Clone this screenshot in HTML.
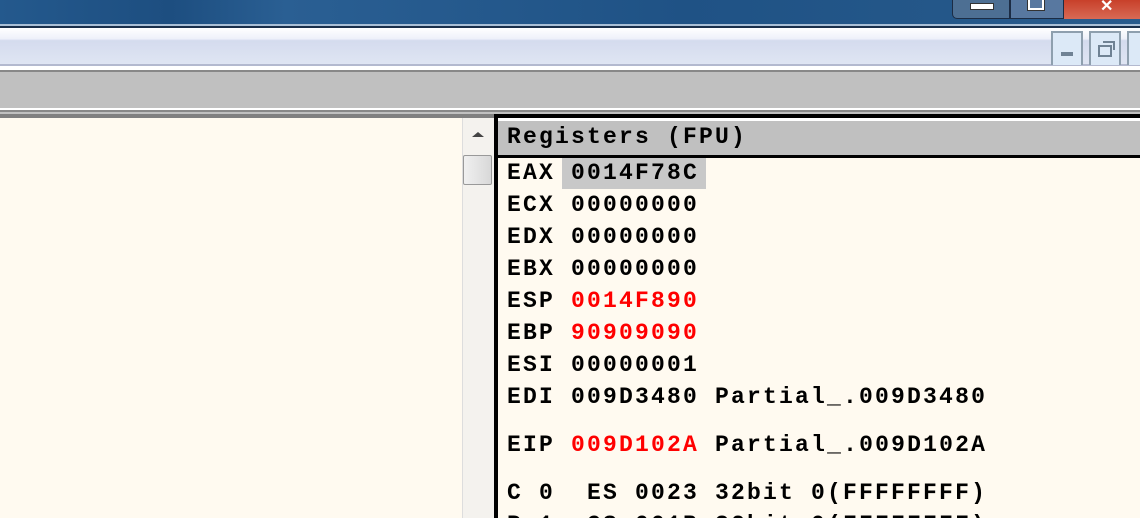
<!DOCTYPE html><html><head><style>
html,body{margin:0;width:1140px;height:518px;overflow:hidden}
body{position:relative;background:#fffaf0;font-family:"Liberation Mono",monospace}
div{position:absolute}
.r{left:507px;font-weight:bold;font-size:23px;letter-spacing:2.2px;line-height:32px;white-space:pre;color:#000}
.red{color:#f00}
</style></head><body>
<div style="left:0;top:0;width:1140px;height:518px;overflow:hidden">
<div style="left:0;top:0;width:1140px;height:24px;background:linear-gradient(90deg,#24598d,#1d4e80 15%,#2a5f93 25%,#1f5285 60%,#285b8c)"></div>
<div style="left:952px;top:0;width:56px;height:18px;background:#4d6f93;border:1px solid #1c2c44;border-top:none;border-radius:0 0 0 5px"></div>
<div style="left:970px;top:3px;width:22px;height:5px;background:#fff;border:1px solid #333"></div>
<div style="left:1010px;top:0;width:52px;height:18px;background:#5878a0;border:1px solid #1c2c44;border-top:none"></div>
<div style="left:1028px;top:0;width:12px;height:8px;border:2px solid #fff;border-top:none;outline:1px solid #333"></div>
<div style="left:1064px;top:0;width:76px;height:19px;background:linear-gradient(#c8402a,#d86a55)"></div>
<div style="left:1100px;top:-4px;color:#fff;font:bold 16px 'Liberation Sans',sans-serif">✕</div>
<div style="left:0;top:24px;width:1140px;height:2px;background:#a9bfd6"></div>
<div style="left:0;top:26px;width:1140px;height:2px;background:#1a2f4a"></div>
<div style="left:0;top:28px;width:1140px;height:36px;background:linear-gradient(#fff,#eef1fa 30%,#d4dbee 35%,#dfe5f3)"></div>
<div style="left:0;top:64px;width:1140px;height:2px;background:#b3b9cf"></div>
<div style="left:1051px;top:31px;width:32px;height:34px;background:#dce9f7;border:2px solid #8e9fae;border-bottom:none;box-sizing:border-box"></div>
<div style="left:1061px;top:52px;width:12px;height:4px;background:#6f8294"></div>
<div style="left:1089px;top:31px;width:32px;height:34px;background:#dce9f7;border:2px solid #8e9fae;border-bottom:none;box-sizing:border-box"></div>
<div style="left:1098px;top:45px;width:10px;height:8px;border:2px solid #6f8294"></div>
<div style="left:1103px;top:41px;width:10px;height:7px;border:2px solid #6f8294;border-left:none;border-bottom:none"></div>
<div style="left:1127px;top:31px;width:13px;height:34px;background:#dce9f7;border:2px solid #8e9fae;border-right:none;border-bottom:none;box-sizing:border-box"></div>
<div style="left:0;top:66px;width:1140px;height:4px;background:#fff"></div>
<div style="left:0;top:70px;width:1140px;height:2px;background:#888"></div>
<div style="left:0;top:72px;width:1140px;height:36px;background:#c0c0c0"></div>
<div style="left:0;top:108px;width:1140px;height:2px;background:#fff"></div>
<div style="left:0;top:110px;width:1140px;height:2px;background:#888"></div>
<div style="left:0;top:112px;width:1140px;height:2px;background:#c0c0c0"></div>
<div style="left:0;top:114px;width:494px;height:4px;background:#808080"></div>
<div style="left:494px;top:114px;width:646px;height:4px;background:#000"></div>
<div style="left:462px;top:118px;width:32px;height:400px;background:#f4f2ee;border-left:1px solid #ddd"></div>
<div style="left:472px;top:132px;width:0;height:0;border:6px solid transparent;border-bottom:5px solid #444;border-top:none"></div>
<div style="left:463px;top:155px;width:27px;height:28px;background:linear-gradient(90deg,#f0f0f0,#d8d8d8);border:1px solid #999;border-radius:2px"></div>
<div style="left:494px;top:118px;width:4px;height:400px;background:#000"></div>
<div style="left:498px;top:118px;width:642px;height:3px;background:#fff"></div>
<div style="left:498px;top:121px;width:642px;height:34px;background:#c0c0c0"></div>
<div style="left:498px;top:155px;width:642px;height:3px;background:#000"></div>
<div class="r" style="top:121px">Registers (FPU)</div>
<div style="left:562px;top:158px;width:144px;height:31px;background:#c8c8c8"></div>
<div class="r" style="top:157px">EAX 0014F78C</div>
<div class="r" style="top:189px">ECX 00000000</div>
<div class="r" style="top:221px">EDX 00000000</div>
<div class="r" style="top:253px">EBX 00000000</div>
<div class="r" style="top:285px">ESP <span class="red">0014F890</span></div>
<div class="r" style="top:317px">EBP <span class="red">90909090</span></div>
<div class="r" style="top:349px">ESI 00000001</div>
<div class="r" style="top:381px">EDI 009D3480 Partial_.009D3480</div>
<div class="r" style="top:429px">EIP <span class="red">009D102A</span> Partial_.009D102A</div>
<div class="r" style="top:477px">C 0  ES 0023 32bit 0(FFFFFFFF)</div>
<div class="r" style="top:509px">P 1  CS 001B 32bit 0(FFFFFFFF)</div>
</div>
</body></html>
